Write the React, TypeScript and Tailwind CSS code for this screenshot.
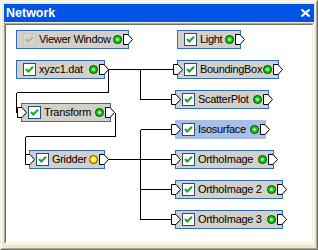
import React from 'react';

type NodeDef = {
  label: string;
  x: number;
  y: number;
  w: number;
  input?: boolean;
  disabled?: boolean;
  selected?: boolean;
  led?: 'green' | 'yellow';
};

// canvas-local coordinates (canvas origin is the white area's top-left)
const NODES: NodeDef[] = [
  { label: 'Viewer Window', x: 10, y: 5, w: 113, disabled: true },
  { label: 'xyzc1.dat', x: 10, y: 35, w: 89 },
  { label: 'Light', x: 171, y: 5, w: 64 },
  { label: 'BoundingBox', x: 171, y: 35, w: 102, input: true },
  { label: 'ScatterPlot', x: 169, y: 65, w: 94, input: true },
  { label: 'Transform', x: 15, y: 78, w: 90, input: true },
  { label: 'Isosurface', x: 169, y: 95, w: 91, input: true, selected: true },
  { label: 'Gridder', x: 23, y: 125, w: 76, input: true, led: 'yellow' },
  { label: 'OrthoImage', x: 169, y: 125, w: 99, input: true },
  { label: 'OrthoImage 2', x: 169, y: 155, w: 108, input: true },
  { label: 'OrthoImage 3', x: 169, y: 185, w: 108, input: true },
];

// wires as pixel runs [x1, y1, x2, y2]
const WIRES: [number, number, number, number][] = [
  [100, 44, 167, 44],
  [134, 44, 134, 74],
  [134, 74, 165, 74],
  [102, 44, 102, 67],
  [10, 67, 102, 67],
  [10, 67, 10, 87],
  [109, 87, 109, 111],
  [19, 111, 109, 111],
  [19, 111, 19, 134],
  [95, 134, 165, 134],
  [134, 104, 134, 194],
  [134, 104, 165, 104],
  [134, 164, 165, 164],
  [134, 194, 165, 194],
];

function Port() {
  return (
    <svg width="10" height="11" viewBox="0 0 10 11" className="block shrink-0">
      <polygon
        points="0.5,0.5 5,0.5 9.5,5.5 5,10.5 0.5,10.5"
        fill="#fff"
        stroke="#000"
        strokeWidth="1"
      />
    </svg>
  );
}

function Led({ color }: { color: 'green' | 'yellow' }) {
  const fill = color === 'green' ? '#0cd40c' : '#ffe81a';
  const edge = color === 'green' ? '#0b3d0b' : '#5a4a00';
  return (
    <svg width="9" height="9" viewBox="0 0 9 9" className="block shrink-0">
      <circle cx="4.5" cy="4.5" r="4" fill={fill} stroke={edge} strokeWidth="1" />
      <circle cx="4.5" cy="4.5" r="1.3" fill="#f4fff0" />
    </svg>
  );
}

function Check({ disabled }: { disabled?: boolean }) {
  return (
    <div
      className={`w-[13px] h-[13px] shrink-0 border flex items-center justify-center ${
        disabled ? 'border-[#c9c6be] bg-[#d8d5cd]' : 'border-[#1c5180] bg-white'
      }`}
    >
      <svg width="11" height="11" viewBox="0 0 11 11" className="block">
        <path
          d="M2 5 L4.3 7.5 L9 2.8"
          fill="none"
          stroke={disabled ? '#b3b0a8' : '#21a121'}
          strokeWidth="2"
        />
      </svg>
    </div>
  );
}

function Node({ n }: { n: NodeDef }) {
  return (
    <div
      className={`absolute h-[19px] flex items-center pl-[6px] border ${
        n.selected ? 'bg-[#a9bfe8] border-[#a9bfe8]' : 'bg-[#d4d0c8] border-[#316ac5]'
      }`}
      style={{ left: n.x, top: n.y, width: n.w }}
    >
      {n.input && (
        <div className="absolute left-[-5px] top-[3px]">
          <Port />
        </div>
      )}
      <Check disabled={n.disabled} />
      <span className="flex-1 min-w-0 ml-[3px] whitespace-nowrap text-[11px] tracking-[-0.3px] leading-[17px] text-black">
        {n.label}
      </span>
      <Led color={n.led ?? 'green'} />
      <div className="ml-[1px] mr-[-5px]">
        <Port />
      </div>
    </div>
  );
}

export default function App() {
  return (
    <div className="w-[318px] h-[250px] bg-[#ece9d8] border border-t-[#f1efe2] border-l-[#f1efe2] border-r-[#716f64] border-b-[#716f64] font-['Liberation_Sans',Arial,sans-serif]">
      <div className="h-full border border-t-white border-l-white border-r-[#aca899] border-b-[#aca899] p-[2px] flex flex-col">
        <div className="h-[18px] shrink-0 bg-[#0055e5] flex items-center justify-between pl-[2px] pr-[4px]">
          <span className="text-white text-[12.5px] font-bold leading-none">Network</span>
          <svg width="9" height="8" viewBox="0 0 9 8" className="block">
            <path d="M0.5 0.5 L8.5 7.5 M8.5 0.5 L0.5 7.5" stroke="#fff" strokeWidth="2" />
          </svg>
        </div>

        <div className="mt-[1px] h-[221px] border border-t-[#aca899] border-l-[#aca899] border-r-white border-b-white">
          <div className="relative h-full bg-white border border-t-[#716f64] border-l-[#716f64] border-r-[#f1efe2] border-b-[#f1efe2] overflow-hidden">
            <svg className="absolute left-0 top-0" width="306" height="217">
              <path
                d={WIRES.map(([x1, y1, x2, y2]) => `M${x1 + 0.5} ${y1 + 0.5} L${x2 + 0.5} ${y2 + 0.5}`).join(' ')}
                stroke="#000"
                strokeWidth="1"
                fill="none"
                shapeRendering="crispEdges"
              />
            </svg>
            {NODES.map((n) => (
              <Node key={n.label} n={n} />
            ))}
          </div>
        </div>
      </div>
    </div>
  );
}
